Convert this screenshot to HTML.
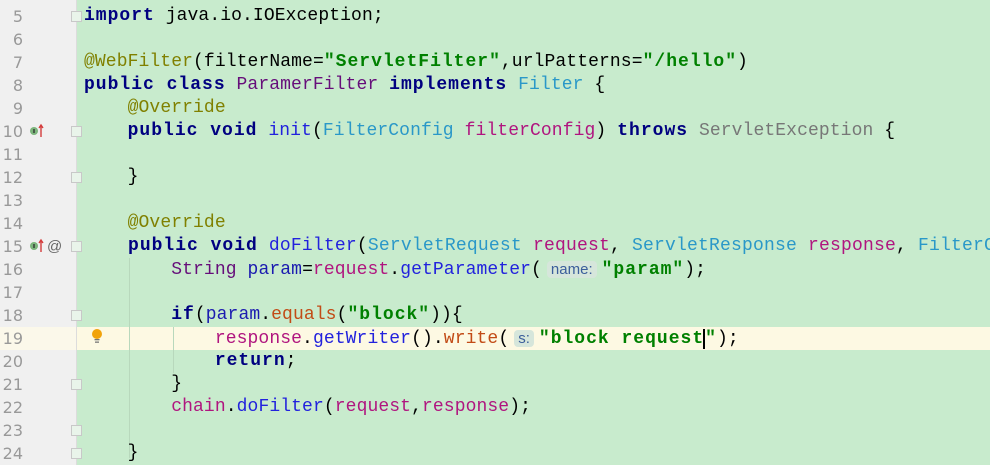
<!DOCTYPE html>
<html><head><meta charset="utf-8"><style>
body{margin:0;width:990px;height:465px;overflow:hidden;background:#c8ebcd;font-family:"Liberation Mono",monospace;}
.ln{position:absolute;left:0;width:23px;text-align:right;color:#999;font-family:"DejaVu Sans",sans-serif;font-size:16px;height:23px;line-height:23px;}
.row{position:absolute;left:84px;height:23px;line-height:23px;font-size:18px;white-space:pre;letter-spacing:0.1px;color:#000;}
.hl{position:absolute;left:0;width:990px;top:327px;height:23px;background:#fdf9e3;}
.k{color:#000080;font-weight:bold;letter-spacing:1px}
.a{color:#808000}
.s{color:#008000;font-weight:bold;letter-spacing:1px}
.c{color:#2a98c8}
.m{color:#2222dd}
.p{color:#b0157f}
.g{color:#777}
.t{color:#660e7a}
.v{color:#1b1bb0}
.r{color:#c24b16}
.f{position:absolute;left:71px;width:9px;height:9px;border:1px solid #c8c8c8;background:#e9f4ea;}
.guide{position:absolute;width:1px;background:#b8d8bc;}
.hint{font-family:"Liberation Sans",sans-serif;font-size:15px;color:#3b5e9b;background:#d6e6db;border-radius:4px;padding:0 4px;margin:0 5px 0 5px;letter-spacing:0}
</style></head><body>
<div class="hl"></div>
<div style="position:absolute;left:0;top:0;width:76px;height:327px;background:#f0f0f0"></div>
<div style="position:absolute;left:0;top:327px;width:76px;height:23px;background:#fbf8ea"></div>
<div style="position:absolute;left:0;top:350px;width:76px;height:115px;background:#f0f0f0"></div>
<div style="position:absolute;left:76px;top:0;width:1px;height:465px;background:#dcdcdc"></div>
<div class="guide" style="left:129px;top:258px;height:200px"></div>
<div class="guide" style="left:173px;top:327px;height:46px"></div>

<div class="ln" style="top:5px">5</div>
<div class="ln" style="top:28px">6</div>
<div class="ln" style="top:51px">7</div>
<div class="ln" style="top:74px">8</div>
<div class="ln" style="top:97px">9</div>
<div class="ln" style="top:120px">10</div>
<div class="ln" style="top:143px">11</div>
<div class="ln" style="top:166px">12</div>
<div class="ln" style="top:189px">13</div>
<div class="ln" style="top:212px">14</div>
<div class="ln" style="top:235px">15</div>
<div class="ln" style="top:258px">16</div>
<div class="ln" style="top:281px">17</div>
<div class="ln" style="top:304px">18</div>
<div class="ln" style="top:327px">19</div>
<div class="ln" style="top:350px">20</div>
<div class="ln" style="top:373px">21</div>
<div class="ln" style="top:396px">22</div>
<div class="ln" style="top:419px">23</div>
<div class="ln" style="top:442px">24</div>

<div class="f" style="top:11px"></div>
<div class="f" style="top:126px"></div>
<div class="f" style="top:172px"></div>
<div class="f" style="top:241px"></div>
<div class="f" style="top:310px"></div>
<div class="f" style="top:379px"></div>
<div class="f" style="top:425px"></div>
<div class="f" style="top:448px"></div>

<svg style="position:absolute;left:28px;top:120px" width="16" height="23"><circle cx="6" cy="11" r="4" fill="#7cb57c"/><rect x="5.3" y="9" width="1.4" height="4" fill="#333"/><path d="M13 17V6M11 8l2-3 2 3" stroke="#d43c3c" stroke-width="1.4" fill="none"/></svg>
<svg style="position:absolute;left:28px;top:235px" width="16" height="23"><circle cx="6" cy="11" r="4" fill="#7cb57c"/><rect x="5.3" y="9" width="1.4" height="4" fill="#333"/><path d="M13 17V6M11 8l2-3 2 3" stroke="#d43c3c" stroke-width="1.4" fill="none"/></svg>
<div style="position:absolute;left:47px;top:235px;line-height:23px;font-family:'Liberation Sans',sans-serif;font-size:15px;color:#666">@</div>
<svg style="position:absolute;left:90px;top:327px" width="14" height="20"><circle cx="7" cy="7" r="5" fill="#f1a30c"/><rect x="4.5" y="12" width="5" height="1.3" fill="#777"/><rect x="5" y="14.5" width="4" height="1.3" fill="#777"/></svg>

<div class="row" style="top:5px"><span class="k">import</span> java.io.IOException;</div>
<div class="row" style="top:51px"><span class="a">@WebFilter</span>(filterName=<span class="s">"ServletFilter"</span>,urlPatterns=<span class="s">"/hello"</span>)</div>
<div class="row" style="top:74px"><span class="k">public class</span> <span class="t">ParamerFilter</span> <span class="k">implements</span> <span class="c">Filter</span> {</div>
<div class="row" style="top:97px">    <span class="a">@Override</span></div>
<div class="row" style="top:120px">    <span class="k">public void</span> <span class="m">init</span>(<span class="c">FilterConfig</span> <span class="p">filterConfig</span>) <span class="k">throws</span> <span class="g">ServletException</span> {</div>
<div class="row" style="top:166px">    }</div>
<div class="row" style="top:212px">    <span class="a">@Override</span></div>
<div class="row" style="top:235px;letter-spacing:0.2px">    <span class="k">public void</span> <span class="m">doFilter</span>(<span class="c">ServletRequest</span> <span class="p">request</span>, <span class="c">ServletResponse</span> <span class="p">response</span>, <span class="c">FilterC</span></div>
<div class="row" style="top:258px">        <span class="t">String</span> <span class="v">param</span>=<span class="p">request</span>.<span class="m">getParameter</span>(<span class="hint">name:</span><span class="s">"param"</span>);</div>
<div class="row" style="top:304px">        <span class="k">if</span>(<span class="v">param</span>.<span class="r">equals</span>(<span class="s">"block"</span>)){</div>
<div class="row" style="top:327px">            <span class="p">response</span>.<span class="m">getWriter</span>().<span class="r">write</span>(<span class="hint">s:</span><span class="s">"block request</span><span style="border-left:2px solid #000;margin-left:-1px"></span><span class="s">"</span>);</div>
<div class="row" style="top:350px">            <span class="k">return</span>;</div>
<div class="row" style="top:373px">        }</div>
<div class="row" style="top:396px">        <span class="p">chain</span>.<span class="m">doFilter</span>(<span class="p">request</span>,<span class="p">response</span>);</div>
<div class="row" style="top:442px">    }</div>
</body></html>
